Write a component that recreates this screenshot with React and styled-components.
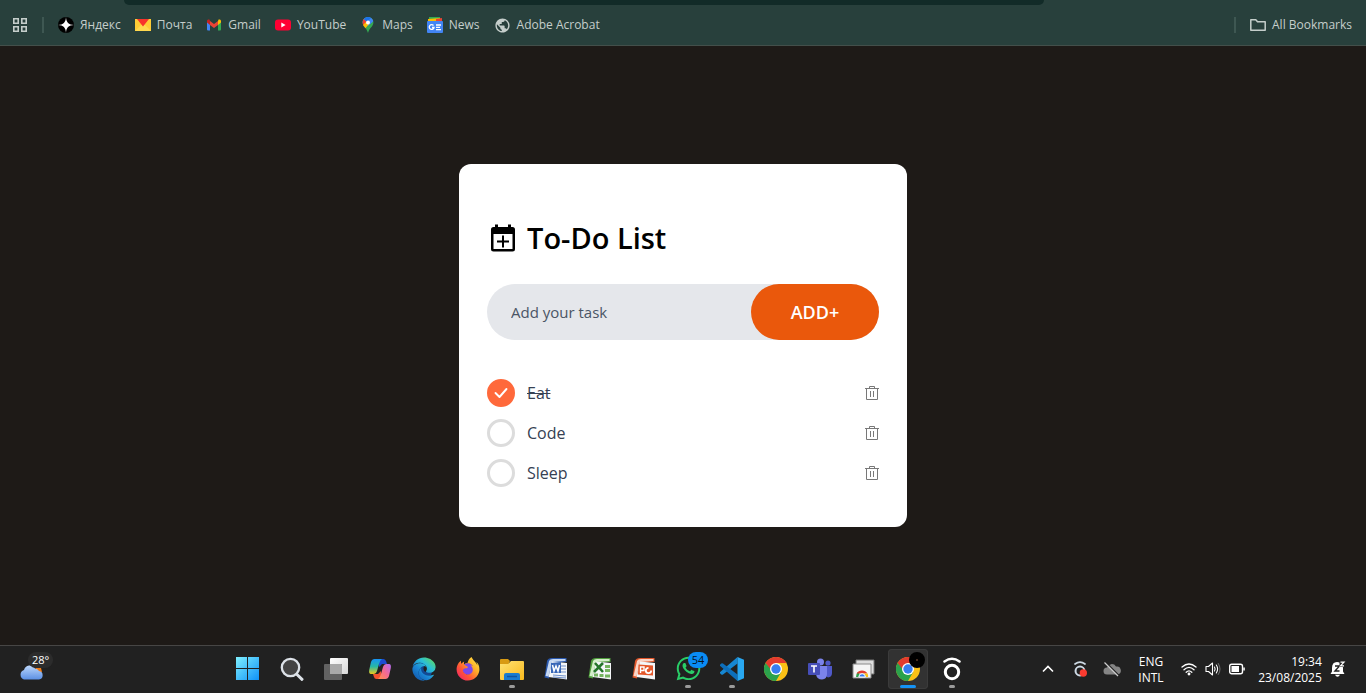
import React, { useState } from "react";
import styled, { createGlobalStyle } from "styled-components";
import { FaEdge, FaFirefoxBrowser, FaWhatsapp } from "react-icons/fa";
import { MdPublic } from "react-icons/md";

const GlobalStyle = createGlobalStyle`
  *, *::before, *::after { box-sizing: border-box; }
  body { margin: 0; background: #1e1a17; font-family: "Open Sans", "Noto Sans", sans-serif; }
  button, input { font: inherit; color: inherit; margin: 0; padding: 0; border: 0; background: none; }
  button { cursor: pointer; }
  ul { list-style: none; margin: 0; padding: 0; }
  a { color: inherit; text-decoration: none; }
  svg { display: block; flex: none; }
`;

const Screen = styled.div`
  display: flex;
  flex-direction: column;
  min-height: 100vh;
`;

/* Browser chrome */
const BookmarksBar = styled.header`
  background: #28403c;
  border-bottom: 1px solid #434f4a;
  color: #c5cecb;
  font-size: 12px;
  line-height: 16px;
`;
const AddressEdge = styled.div`
  height: 5px;
  margin: 0 322px 0 124px;
  background: #122b28;
  border-radius: 0 0 16px 16px;
`;
const BookmarksRow = styled.nav`
  display: flex;
  align-items: center;
  height: 40px;
  padding: 0 14px 0 12px;
`;
const Separator = styled.span`
  width: 2px;
  height: 16px;
  margin: 0 14px;
  background: #3e5752;
`;
const Bookmark = styled.a`
  display: flex;
  align-items: center;
  gap: 6px;
  margin-right: ${(p) => (p.$last ? 0 : 14)}px;
  white-space: nowrap;
`;
const Spacer = styled.span`
  flex: 1;
`;

/* To-do card */
const Page = styled.main`
  flex: 1;
  display: grid;
  place-items: center;
  padding: 24px 16px;
`;
const Card = styled.section`
  width: 100%;
  max-width: 448px;
  padding: 56px 28px 40px;
  background: #fff;
  border-radius: 12px;
`;
const Heading = styled.div`
  display: flex;
  align-items: center;
  gap: 8px;
  margin-bottom: 28px;
`;
const Title = styled.h1`
  margin: 0;
  font-size: 29px;
  line-height: 36px;
  font-weight: 600;
  color: #000;
`;
const TaskForm = styled.form`
  display: flex;
  height: 56px;
  margin-bottom: 39px;
  border-radius: 28px;
  background: #e5e7eb;
`;
const TaskInput = styled.input`
  flex: 1;
  min-width: 0;
  padding: 0 8px 0 24px;
  font-size: 15px;
  color: #364153;
  outline: none;
  &::placeholder { color: #4a5565; opacity: 1; }
`;
const AddButton = styled.button`
  width: 128px;
  border-radius: 28px;
  background: #ea580c;
  color: #fff;
  font-size: 18px;
  font-weight: 600;
`;
const TaskList = styled.ul`
  display: flex;
  flex-direction: column;
  gap: 12px;
`;
const TaskRow = styled.li`
  display: flex;
  align-items: center;
  height: 28px;
`;
const TaskLabel = styled.label`
  flex: 1;
  display: flex;
  align-items: center;
  gap: 12px;
  font-size: 16px;
  line-height: 28px;
  color: #364153;
  cursor: pointer;
`;
const TaskText = styled.span`
  text-decoration: ${(p) => (p.$done ? "line-through" : "none")};
  text-decoration-thickness: 1px;
`;
const Tick = styled.span`
  display: grid;
  place-items: center;
  & > * { grid-area: 1 / 1; }
  svg { pointer-events: none; }
`;
const TickBox = styled.input`
  appearance: none;
  width: 28px;
  height: 28px;
  border: 3px solid #dcdcdc;
  border-radius: 50%;
  &:checked { border-color: #ff693b; background: #ff693b; }
`;
const DeleteButton = styled.button`
  display: flex;
`;

/* Taskbar */
const Taskbar = styled.footer`
  display: flex;
  height: 48px;
  padding-bottom: 2px;
  background: #212121;
  border-top: 1px solid #474645;
  color: #fff;
  font-size: 11px;
  line-height: 16px;
`;
const Weather = styled.div`
  position: relative;
  flex: 0 0 226px;
  padding: 15px 0 0 19px;
`;
const Temperature = styled.span`
  position: absolute;
  left: 28px;
  top: 6px;
  padding: 0 4px;
  border-radius: 8px;
  background: #2c2c2c;
`;
const Apps = styled.nav`
  display: flex;
  align-items: center;
`;
const AppButton = styled.button`
  position: relative;
  display: grid;
  place-items: center;
  width: 40px;
  height: 40px;
  margin: 0 2px;
  border-radius: 4px;
  background: ${(p) => (p.$active ? "#323232" : "none")};
  box-shadow: ${(p) => (p.$active ? "inset 0 0 0 1px #3b3b3b" : "none")};
  &::after {
    content: "";
    position: absolute;
    bottom: 1px;
    width: ${(p) => (p.$active ? 16 : 6)}px;
    height: 3px;
    border-radius: 2px;
    background: ${(p) => (p.$active ? "#1593f5" : p.$running ? "#9b9b9b" : "none")};
  }
`;
const CountBadge = styled.span`
  position: absolute;
  top: 3px;
  right: 0;
  min-width: 20px;
  border-radius: 8px;
  background: #0a8cf5;
  color: #06121d;
`;
const ProfileBadge = styled.span`
  position: absolute;
  top: 3px;
  right: 3px;
  width: 16px;
  height: 16px;
  border: 7px solid #000;
  border-radius: 50%;
  background: #5b3a2a;
`;
const Tray = styled.div`
  display: flex;
  align-items: center;
  margin-left: auto;
  padding-right: 14px;
`;
const TrayButton = styled.button`
  display: flex;
  align-items: center;
  justify-content: center;
  gap: ${(p) => p.$gap || 0}px;
  width: ${(p) => p.$width || 32}px;
  height: 40px;
`;
const TrayText = styled.span`
  display: flex;
  flex-direction: column;
  padding-top: 2px;
  font-size: 12px;
  text-align: ${(p) => p.$align || "center"};
`;

/* Bookmark icons */
const AppsGridIcon = () => (
  <svg width="16" height="16" viewBox="0 0 16 16" fill="none" stroke="#c5cecb" strokeWidth="1.6">
    <path d="M1.8 1.8h4.4v4.4H1.8zM9.8 1.8h4.4v4.4H9.8zM1.8 9.8h4.4v4.4H1.8zM9.8 9.8h4.4v4.4H9.8z" />
  </svg>
);
const YandexIcon = () => (
  <svg width="16" height="16" viewBox="0 0 16 16">
    <circle cx="8" cy="8" r="8" fill="#000" />
    <path d="M8 0c.3 5.5 2.5 7.700 8 8-5.500.3-7.700 2.500-8 8-.3-5.500-2.500-7.700-8-8 5.500-.3 7.700-2.500 8-8Z" fill="#fff" />
  </svg>
);
const MailIcon = () => (
  <svg width="16" height="16" viewBox="0 0 16 16">
    <path d="M0 2h16v12H0z" fill="#ffcc36" />
    <path d="M0 14l6-6h4l6 6z" fill="#ffd94f" />
    <path d="M2 2h12L8 9.500z" fill="#f8332c" />
  </svg>
);
const GmailIcon = () => (
  <svg width="16" height="16" viewBox="0 0 16 16">
    <path d="M1 4v8.500q0 1 1 1h2V6z" fill="#4285f4" />
    <path d="M12 6v7.500h2q1 0 1-1V4z" fill="#34a853" />
    <path d="M12 4.300v3.600l3-2.300V4.100c0-1.600-1.700-2-2.600-1.300z" fill="#fbbc04" />
    <path d="M4 4.300v3.600L1 5.600V4.100c0-1.600 1.700-2 2.600-1.300z" fill="#c5221f" />
    <path d="M4 4v3.900l4 3 4-3V4L8 7z" fill="#ea4335" />
  </svg>
);
const YouTubeIcon = () => (
  <svg width="16" height="16" viewBox="0 0 16 16">
    <rect y="2.500" width="16" height="11" rx="3" fill="#ff0033" />
    <path d="M6.300 5.600v4.800L10.600 8z" fill="#fff" />
  </svg>
);
const MapsIcon = () => (
  <svg width="16" height="16" viewBox="0 0 16 16">
    <defs>
      <clipPath id="pin"><path d="M8 0a5.400 5.400 0 0 0-5.400 5.500C2.600 9.500 6.500 10.500 8 16c1.500-5.500 5.400-6.500 5.400-10.500A5.400 5.400 0 0 0 8 0Z" /></clipPath>
    </defs>
    <g clipPath="url(#pin)">
      <path d="M0 0h16v16H0z" fill="#34a853" />
      <path d="M0 0h16v2L8 9 0 4z" fill="#4285f4" />
      <path d="M0 1l4 1 4 4-5 4H0z" fill="#ea4335" />
      <path d="M2 9l4-4 3 2-5 6z" fill="#fbbc04" />
      <path d="M5 0h7L7 5 4 2z" fill="#1a73e8" />
    </g>
    <circle cx="8" cy="5.500" r="2" fill="#fff" />
  </svg>
);
const NewsIcon = () => (
  <svg width="16" height="16" viewBox="0 0 16 16">
    <path d="M2 0h11v5H2z" fill="#34a853" />
    <path d="M1 2l12-1 1 4H1z" fill="#fbbc04" />
    <path d="M9 2l6-1v4H9z" fill="#ea4335" />
    <rect y="4" width="16" height="12" rx="1" fill="#4285f4" />
    <path d="M6.500 8.500A2.400 2.400 0 1 0 7 10.500H5M9 8h5M9 10.300h4M9 12.600h5" fill="none" stroke="#fff" strokeWidth="1.300" />
  </svg>
);
const GlobeIcon = () => <MdPublic size={17} color="#c5cecb" />;
const FolderIcon = () => (
  <svg width="16" height="16" viewBox="0 0 16 16" fill="none" stroke="#c5cecb" strokeWidth="1.500" strokeLinejoin="round">
    <path d="M.8 13.200V2.800h5l1.700 2h7.700v8.400z" />
  </svg>
);

/* Card icons */
const CalendarPlusIcon = () => (
  <svg width="32" height="36" viewBox="0 0 32 36" fill="#000">
    <path fillRule="evenodd" d="M8 4.500h3V7h10V4.500h3V7h1.500A2.500 2.500 0 0 1 28 9.500V29a2.500 2.500 0 0 1-2.500 2.500h-19A2.500 2.500 0 0 1 4 29V9.500A2.500 2.500 0 0 1 6.500 7H8ZM6.500 14v15h19V14Z" />
    <path d="M15 15.500h2v5h5v2h-5v5h-2v-5h-5v-2h5z" />
  </svg>
);
const CheckIcon = () => (
  <svg width="14" height="12" viewBox="0 0 14 12" fill="none" stroke="#fff" strokeWidth="1.900" strokeLinecap="round" strokeLinejoin="round">
    <path d="M1.500 6l4 4L12.500 2" />
  </svg>
);
const TrashIcon = () => (
  <svg width="14" height="16" viewBox="0 0 14 16" fill="none" stroke="#787878">
    <path d="M0 3.500h14M4.500 3V1.500h5V3M1.500 4v10.500h11V4M5.500 6v6M8.500 6v6" />
  </svg>
);

/* Taskbar icons */
const CloudIcon = () => (
  <svg width="26" height="20" viewBox="0 0 26 20">
    <defs><linearGradient id="cloud" x2="0" y2="1"><stop stopColor="#bcd7fb" /><stop offset="1" stopColor="#5c90e4" /></linearGradient></defs>
    <path d="M14 11h9l-1-4h-5z" fill="#f27b13" />
    <path d="M5 18.500a5 5 0 0 1 0-9.500 6 6 0 0 1 11-1.500 5 5 0 0 1 4 2.500 4.300 4.300 0 0 1 0 8.500z" fill="url(#cloud)" />
  </svg>
);
const WindowsIcon = () => (
  <svg width="24" height="24" viewBox="0 0 24 24">
    <defs><linearGradient id="win" gradientUnits="userSpaceOnUse" x1="0" y1="0" x2="24" y2="24"><stop stopColor="#7ff0ff" /><stop offset="1" stopColor="#0a8df8" /></linearGradient></defs>
    <path d="M0 0h11v11H0zM12 0h11v11H12zM0 12h11v11H0zM12 12h11v11H12z" fill="url(#win)" />
  </svg>
);
const SearchIcon = () => (
  <svg width="24" height="24" viewBox="0 0 24 24" stroke="#dde2e8" fill="#444">
    <path d="M17 17.500l5 4.800" strokeWidth="3" strokeLinecap="round" />
    <circle cx="10.500" cy="10.500" r="8.700" strokeWidth="2.300" />
  </svg>
);
const TaskViewIcon = () => (
  <svg width="24" height="24" viewBox="0 0 24 24">
    <defs><linearGradient id="tv" x2="1" y2="1"><stop stopColor="#fff" /><stop offset="1" stopColor="#d8d8d8" /></linearGradient></defs>
    <rect x="6" y="1" width="18" height="16" rx="1" fill="url(#tv)" />
    <rect x="0" y="7" width="18" height="16" rx="1" fill="#626262" />
    <path d="M6 7h11q1 0 1 1v9H6z" fill="#a9a9a9" />
  </svg>
);
const CopilotIcon = () => (
  <svg width="24" height="24" viewBox="0 0 24 24">
    <defs>
      <linearGradient id="cpA" x2="0" y2="1"><stop stopColor="#1693f5" /><stop offset=".5" stopColor="#28b8a4" /><stop offset="1" stopColor="#ecc91b" /></linearGradient>
      <linearGradient id="cpB" x1="1" x2="0" y2="1"><stop stopColor="#b26cf5" /><stop offset=".5" stopColor="#f46a91" /><stop offset="1" stopColor="#ff934a" /></linearGradient>
    </defs>
    <path d="M11 2h4.500q2 0 2.700 2.500L19 7h-5l-3 3z" fill="#1b4bd1" />
    <path d="M13 22H8.500q-2 0-2.700-2.500L5 17h5l3-3z" fill="#f4512e" />
    <path d="M6.500 2H14q-2 1-3 5L9 14q-1 3-3.500 3H3Q.6 17 1.200 13L3 5q1-3 3.500-3Z" fill="url(#cpA)" />
    <path d="M17.500 22H10q2-1 3-5l2-7q1-3 3.500-3H21q2.400 0 1.800 4L21 19q-1 3-3.500 3Z" fill="url(#cpB)" />
  </svg>
);
const Svg24 = styled.svg.attrs({ width: 24, height: 24, viewBox: "0 0 24 24" })``;
const EdgeIcon = () => (
  <Svg24>
    <defs>
      <linearGradient id="edge" x1="1" y1=".1" x2=".2" y2="1"><stop stopColor="#5fdc5c" /><stop offset=".35" stopColor="#2bbfd6" /><stop offset=".65" stopColor="#1b88d6" /><stop offset="1" stopColor="#1259ad" /></linearGradient>
    </defs>
    <circle cx="11.500" cy="14" r="8.500" fill="#124a94" />
    <circle cx="15" cy="11.500" r="3.500" fill="#212121" />
    <FaEdge size={24} style={{ fill: "url(#edge)" }} />
  </Svg24>
);
const FirefoxIcon = () => (
  <Svg24>
    <defs><linearGradient id="ff" x1="1" x2="0" y2="1"><stop stopColor="#fff04c" /><stop offset=".35" stopColor="#ffb029" /><stop offset=".65" stopColor="#ff5636" /><stop offset="1" stopColor="#ef1675" /></linearGradient></defs>
    <circle cx="12" cy="12" r="6" fill="#7b48ea" />
    <FaFirefoxBrowser size={24} style={{ fill: "url(#ff)" }} />
  </Svg24>
);
const ExplorerIcon = () => (
  <Svg24>
    <defs><linearGradient id="fold" x2="1" y2="1"><stop stopColor="#ffe274" /><stop offset="1" stopColor="#f8b91c" /></linearGradient></defs>
    <path d="M0 10V3q0-1 1-1h7l2 2-2 4z" fill="#d89a13" />
    <path d="M0 7h8l3-3h12q1 0 1 1v17q0 1-1 1H1q-1 0-1-1z" fill="url(#fold)" />
    <path d="M4 23v-5q0-2 2-2h12q2 0 2 2v5z" fill="#177bd0" />
    <path d="M7 19.500h10" stroke="#0d54a2" strokeWidth="1.500" />
  </Svg24>
);
const OfficeFrame = ({ colour, light, children }) => (
  <Svg24>
    <path d="M3 4Q4 1 8 1h14.500v4L8 6 5 21.500.500 20.500z" fill={colour} />
    <path d="M5 4q1-2 4-2h12.500v2L8 5 4.500 19.500 1.500 19z" fill={light} />
    <path d="M8 4.500L23 6v16.500L4.500 20z" fill="#f4f6f8" />
    {children}
  </Svg24>
);
const WordIcon = () => (
  <OfficeFrame colour="#2a58ad" light="#c6d8f2">
    <path d="M16 9h6M16 12h6M16 15h6M9 18l13 1M9 20l13 1" stroke="#6e8fc9" />
    <path d="M7 6l10-1v11H7z" fill="#3867b8" />
    <path d="M8.500 8l1.500 6 2-5 2 5L15.500 8" fill="none" stroke="#fff" strokeWidth="1.500" />
  </OfficeFrame>
);
const ExcelIcon = () => (
  <OfficeFrame colour="#4f9c3c" light="#d3eec9">
    <path d="M17 9.500h5M17 13.500h5M6 18h4M11.500 18.500h4M17 19h5" stroke="#74b35f" strokeWidth="3" />
    <path d="M7 6l8 9M15 6l-9 9" fill="none" stroke="#25752a" strokeWidth="2.600" />
  </OfficeFrame>
);
const PowerPointIcon = () => (
  <OfficeFrame colour="#e0562a" light="#fbd5c6">
    <path d="M6.500 7.500l14.500 1v10L6 17.500z" fill="#e4572a" />
    <path d="M8.500 16v-6H12v3.500H9" fill="none" stroke="#fff" strokeWidth="1.400" />
    <circle cx="16.500" cy="13.500" r="2.700" fill="none" stroke="#fff" strokeWidth="1.800" />
    <path d="M16.500 13.500V10H20v3.500z" fill="#e4572a" />
  </OfficeFrame>
);
const WhatsAppIcon = () => <FaWhatsapp size={27} color="#29cd67" />;
const VsCodeIcon = () => (
  <Svg24>
    <path d="M1.300 17.500L0 16.200q-.5-.7.200-1.300L17.500 0v6.500L3 17.500q-.9.600-1.700 0Z" fill="#1687d2" />
    <path d="M1.300 6.500L0 7.800q-.5.700.2 1.300L17.500 24v-6.500L3 6.500q-.9-.6-1.700 0Z" fill="#0d6fbb" />
    <path d="M17.500 0L24 2.800v18.400L17.500 24z" fill="#29a8f1" />
  </Svg24>
);
const ChromeIcon = () => (
  <Svg24>
    <circle cx="12" cy="12" r="12" fill="#fbc116" />
    <path d="M1.600 6A12 12 0 0 1 22.400 6H12L7 15z" fill="#e33b2e" />
    <path d="M1.600 6a12 12 0 0 0 10.400 18l5.200-9-8 .5z" fill="#2ba24c" />
    <circle cx="12" cy="12" r="6" fill="#fff" />
    <circle cx="12" cy="12" r="4.700" fill="#377df0" />
  </Svg24>
);
const TeamsIcon = () => (
  <Svg24>
    <circle cx="12.500" cy="5" r="3.500" fill="#7b83eb" />
    <circle cx="20" cy="6" r="2.600" fill="#5059c9" />
    <path d="M17 9h7v7q0 4-4 4.500L16 18z" fill="#5059c9" />
    <path d="M8 9h11v8q0 5-5 5.500-5 0-6-5z" fill="#7b83eb" />
    <rect y="6" width="12" height="12" rx="1" fill="#464eb8" />
    <path d="M3 9h6M6 9v6.500" stroke="#fff" strokeWidth="1.600" />
  </Svg24>
);
const RemoteIcon = () => (
  <Svg24>
    <path d="M4 3h18v14H4z" fill="#ddd" stroke="#777" />
    <path d="M1 7h18v14H1z" fill="#f5f5f5" stroke="#8a8a8a" />
    <path d="M4 20a6 6 0 0 1 2-5l4 5z" fill="#2ba24c" />
    <path d="M4.500 16.500a6.500 6.500 0 0 1 11 0z" fill="#e33b2e" />
    <path d="M11 16.500h4.500Q16.500 18 16 20h-5z" fill="#fbc116" />
    <path d="M6.800 20a3.300 3.300 0 0 1 6.600 0z" fill="#377df0" stroke="#fff" />
  </Svg24>
);
const RingIcon = ({ size = 24, dot }) => (
  <svg width={size} height={size} viewBox="0 0 24 24" fill="none" stroke={dot ? "#cdd9e4" : "#fff"} strokeLinecap="round">
    <circle cx="12" cy="15" r="6.700" strokeWidth="3" />
    <path d="M4.500 4.500q7.500-5.500 15 0" strokeWidth="2.500" />
    {dot && <circle cx="17" cy="18" r="5.500" fill="#fb3b30" stroke="none" />}
  </svg>
);
const ChevronUpIcon = () => (
  <svg width="12" height="8" viewBox="0 0 12 8" fill="none" stroke="#fff" strokeWidth="1.600"><path d="M1 6.500l5-5 5 5" /></svg>
);
const CloudOffIcon = () => (
  <svg width="18" height="16" viewBox="0 0 18 16">
    <path d="M4 13.500a3.500 3.500 0 0 1 0-7 5 5 0 0 1 9-1 4 4 0 0 1 1.500 8z" fill="#858585" />
    <path d="M3 1.500L16.500 15" stroke="#212121" strokeWidth="1.500" />
    <path d="M1.500 1.500L15 15" stroke="#ccc" strokeWidth="1.200" />
  </svg>
);
const WifiIcon = () => (
  <svg width="16" height="16" viewBox="0 0 16 16" fill="none" stroke="#fff" strokeWidth="1.300" strokeLinecap="round">
    <path d="M1 6q7-6 14 0M3 8.700q5-4.700 10 0M5.200 11.200q2.800-2.600 5.600 0" /><circle cx="8" cy="13" r=".8" fill="#fff" />
  </svg>
);
const VolumeIcon = () => (
  <svg width="16" height="16" viewBox="0 0 16 16" fill="none" stroke="#fff" strokeWidth="1.100" strokeLinecap="round" strokeLinejoin="round">
    <path d="M1 5.500v5h2.500L7.500 14V2L3.500 5.500zM9.500 6q1.300 2 0 4M11.300 4q2.600 4 0 8" /><path d="M13.200 2.500q3.600 5.500 0 11" stroke="#666" />
  </svg>
);
const BatteryIcon = () => (
  <svg width="16" height="16" viewBox="0 0 16 16">
    <rect x=".7" y="3.200" width="12.800" height="9.600" rx="2" fill="none" stroke="#fff" strokeWidth="1.400" />
    <path d="M2.500 5H10v6H2.500zM14.300 6.500h1.500v3h-1.500z" fill="#fff" />
  </svg>
);
const BellIcon = () => (
  <svg width="16" height="16" viewBox="0 0 16 16" fill="#fff">
    <path d="M2 10.500V7q0-6 5-6 6 0 6 6v3.500l1.500 2.500H.5zM5 13.800h5q-1 2-2.500 2t-2.500-2z" />
    <path d="M9.500 0H16v6H9.500z" fill="#212121" />
    <path d="M5 5h4.500l-4.500 5h4.500" fill="none" stroke="#212121" strokeWidth="1.400" />
    <path d="M10.500 1.200H14l-3.500 3.600H14" fill="none" stroke="#fff" strokeWidth="1.200" />
  </svg>
);

const bookmarks = [
  ["Яндекс", YandexIcon],
  ["Почта", MailIcon],
  ["Gmail", GmailIcon],
  ["YouTube", YouTubeIcon],
  ["Maps", MapsIcon],
  ["News", NewsIcon],
  ["Adobe Acrobat", GlobeIcon],
];

const apps = [
  { name: "Start", Icon: WindowsIcon },
  { name: "Search", Icon: SearchIcon },
  { name: "Task View", Icon: TaskViewIcon },
  { name: "Copilot", Icon: CopilotIcon },
  { name: "Edge", Icon: EdgeIcon },
  { name: "Firefox", Icon: FirefoxIcon },
  { name: "File Explorer", Icon: ExplorerIcon, running: true },
  { name: "Word", Icon: WordIcon },
  { name: "Excel", Icon: ExcelIcon },
  { name: "PowerPoint", Icon: PowerPointIcon },
  { name: "WhatsApp", Icon: WhatsAppIcon, running: true, count: 54 },
  { name: "Visual Studio Code", Icon: VsCodeIcon, running: true },
  { name: "Chrome", Icon: ChromeIcon },
  { name: "Teams", Icon: TeamsIcon },
  { name: "Remote Desktop", Icon: RemoteIcon },
  { name: "Chrome window", Icon: ChromeIcon, active: true },
  { name: "Recorder", Icon: RingIcon, running: true },
];

export default function App() {
  const [draft, setDraft] = useState("");
  const [tasks, setTasks] = useState([
    { id: 1, text: "Eat", done: true },
    { id: 2, text: "Code", done: false },
    { id: 3, text: "Sleep", done: false },
  ]);

  const addTask = (event) => {
    event.preventDefault();
    const text = draft.trim();
    if (!text) return;
    setTasks([...tasks, { id: Date.now(), text, done: false }]);
    setDraft("");
  };
  const toggle = (id) => setTasks(tasks.map((t) => (t.id === id ? { ...t, done: !t.done } : t)));
  const remove = (id) => setTasks(tasks.filter((t) => t.id !== id));

  return (
    <Screen>
      <GlobalStyle />
      <BookmarksBar>
        <AddressEdge />
        <BookmarksRow aria-label="Bookmarks">
          <AppsGridIcon />
          <Separator />
          {bookmarks.map(([name, Icon]) => (
            <Bookmark href="#" key={name}><Icon />{name}</Bookmark>
          ))}
          <Spacer />
          <Separator />
          <Bookmark href="#" $last><FolderIcon />All Bookmarks</Bookmark>
        </BookmarksRow>
      </BookmarksBar>

      <Page>
        <Card>
          <Heading><CalendarPlusIcon /><Title>To-Do List</Title></Heading>
          <TaskForm onSubmit={addTask}>
            <TaskInput
              aria-label="Add your task"
              placeholder="Add your task"
              value={draft}
              onChange={(event) => setDraft(event.target.value)}
            />
            <AddButton type="submit">ADD+</AddButton>
          </TaskForm>
          <TaskList>
            {tasks.map((task) => (
              <TaskRow key={task.id}>
                <TaskLabel>
                  <Tick>
                    <TickBox type="checkbox" checked={task.done} onChange={() => toggle(task.id)} />
                    {task.done && <CheckIcon />}
                  </Tick>
                  <TaskText $done={task.done}>{task.text}</TaskText>
                </TaskLabel>
                <DeleteButton type="button" aria-label={`Delete ${task.text}`} onClick={() => remove(task.id)}>
                  <TrashIcon />
                </DeleteButton>
              </TaskRow>
            ))}
          </TaskList>
        </Card>
      </Page>

      <Taskbar>
        <Weather><CloudIcon /><Temperature>28°</Temperature></Weather>
        <Apps aria-label="Taskbar">
          {apps.map(({ name, Icon, running, active, count }) => (
            <AppButton key={name} type="button" aria-label={name} $running={running} $active={active}>
              <Icon />
              {count && <CountBadge>{count}</CountBadge>}
              {active && <ProfileBadge />}
            </AppButton>
          ))}
        </Apps>
        <Tray>
          <TrayButton type="button" aria-label="Show hidden icons"><ChevronUpIcon /></TrayButton>
          <TrayButton type="button" aria-label="Recorder status"><RingIcon size={16} dot /></TrayButton>
          <TrayButton type="button" aria-label="Cloud storage"><CloudOffIcon /></TrayButton>
          <TrayButton type="button" $width={46}><TrayText><span>ENG</span><span>INTL</span></TrayText></TrayButton>
          <TrayButton type="button" aria-label="Quick settings" $width={78} $gap={8}>
            <WifiIcon /><VolumeIcon /><BatteryIcon />
          </TrayButton>
          <TrayButton type="button" $width={100} $gap={8}>
            <TrayText $align="right"><span>19:34</span><span>23/08/2025</span></TrayText>
            <BellIcon />
          </TrayButton>
        </Tray>
      </Taskbar>
    </Screen>
  );
}
